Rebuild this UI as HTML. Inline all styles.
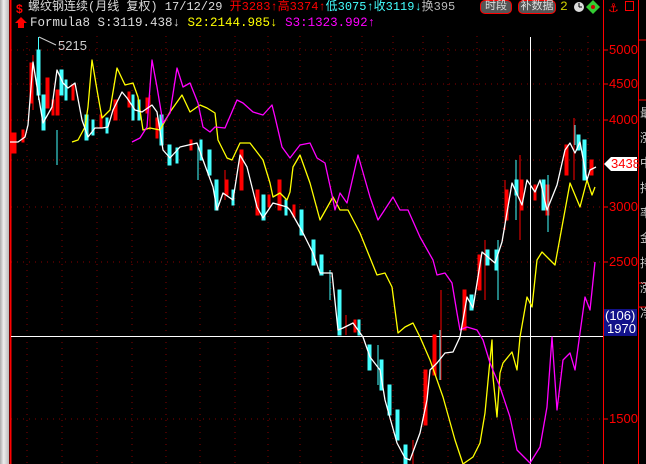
<!DOCTYPE html>
<html><head><meta charset="utf-8"><style>
html,body{margin:0;padding:0;background:#000;width:646px;height:464px;overflow:hidden}
body{position:relative;font-family:"Liberation Mono","Noto Sans CJK SC",monospace}
.t{position:absolute;white-space:nowrap;font-size:13px;line-height:14px}
.ax{position:absolute;left:609px;color:#f00;font-family:"Liberation Sans",sans-serif;font-size:13px;line-height:14px}
</style></head><body>
<div style="position:absolute;left:0;top:0;width:9px;height:464px;background:linear-gradient(90deg,#aaa,#eee 40%,#bbb)"></div>
<svg width="646" height="464" style="position:absolute;left:0;top:0">
<g stroke="#800" stroke-width="1" stroke-dasharray="1,5">
<line x1="11" y1="50" x2="603" y2="50"/><line x1="11" y1="84" x2="603" y2="84"/><line x1="11" y1="120" x2="603" y2="120"/><line x1="11" y1="160" x2="603" y2="160"/><line x1="11" y1="207" x2="603" y2="207"/><line x1="11" y1="262" x2="603" y2="262"/><line x1="11" y1="419" x2="603" y2="419"/>
<line x1="27" y1="36" x2="27" y2="464"/><line x1="62" y1="36" x2="62" y2="464"/><line x1="97" y1="36" x2="97" y2="464"/><line x1="132" y1="36" x2="132" y2="464"/><line x1="166" y1="36" x2="166" y2="464"/><line x1="200" y1="36" x2="200" y2="464"/><line x1="235" y1="36" x2="235" y2="464"/><line x1="268" y1="36" x2="268" y2="464"/><line x1="300" y1="36" x2="300" y2="464"/><line x1="331" y1="36" x2="331" y2="464"/><line x1="362" y1="36" x2="362" y2="464"/><line x1="393" y1="36" x2="393" y2="464"/><line x1="423" y1="36" x2="423" y2="464"/><line x1="448" y1="36" x2="448" y2="464"/><line x1="477" y1="36" x2="477" y2="464"/><line x1="503" y1="36" x2="503" y2="464"/><line x1="560" y1="36" x2="560" y2="464"/><line x1="588" y1="36" x2="588" y2="464"/>
</g>
<line x1="10.5" y1="0" x2="10.5" y2="464" stroke="#f00" stroke-width="2"/>
<line x1="603.5" y1="0" x2="603.5" y2="464" stroke="#f00"/>
<line x1="638.5" y1="0" x2="638.5" y2="464" stroke="#f00"/>
<g stroke="#f00"><line x1="603" y1="50" x2="608" y2="50"/><line x1="603" y1="84" x2="608" y2="84"/><line x1="603" y1="120" x2="608" y2="120"/><line x1="603" y1="207" x2="608" y2="207"/><line x1="603" y1="262" x2="608" y2="262"/><line x1="603" y1="419" x2="608" y2="419"/>
<line x1="638" y1="40" x2="646" y2="40"/><line x1="638" y1="100" x2="646" y2="100"/><line x1="638" y1="283" x2="646" y2="283"/><line x1="638" y1="307" x2="646" y2="307"/></g>
<line x1="11" y1="336.5" x2="603" y2="336.5" stroke="#fff"/>
<line x1="530.5" y1="37" x2="530.5" y2="464" stroke="#fff"/>
<g fill="#f00" stroke="#f00">
<rect x="12" y="133" width="4" height="20"/><rect x="22" y="130" width="2" height="12"/><rect x="30" y="63" width="3" height="40"/><rect x="46" y="78" width="3" height="30"/><rect x="52" y="100" width="2" height="15"/><rect x="56" y="90" width="3" height="25"/><rect x="72" y="85" width="2" height="15"/><rect x="100" y="115" width="2" height="12"/><rect x="114" y="100" width="3" height="20"/><rect x="128" y="92" width="2" height="15"/><rect x="146" y="98" width="2" height="15"/><rect x="156" y="118" width="2" height="20"/><rect x="190" y="140" width="2" height="10"/><rect x="226" y="180" width="2" height="15"/><rect x="240" y="150" width="3" height="40"/><rect x="256" y="190" width="3" height="25"/><rect x="268" y="195" width="2" height="12"/><rect x="278" y="180" width="3" height="30"/><rect x="293" y="205" width="2" height="12"/><rect x="354" y="320" width="2" height="12"/><rect x="424" y="370" width="3" height="55"/><rect x="433" y="335" width="3" height="40"/><rect x="463" y="290" width="3" height="40"/><rect x="478" y="255" width="3" height="35"/><rect x="505" y="190" width="3" height="30"/><rect x="520" y="180" width="3" height="30"/><rect x="534" y="185" width="2" height="15"/><rect x="546" y="185" width="3" height="30"/><rect x="565" y="145" width="3" height="30"/><rect x="590" y="160" width="3" height="15"/>
<line x1="441" y1="290" x2="441" y2="380"/><line x1="413" y1="440" x2="413" y2="464"/><line x1="574" y1="118" x2="574" y2="180"/><line x1="520" y1="155" x2="520" y2="240"/><line x1="485" y1="240" x2="485" y2="300"/><line x1="346" y1="315" x2="346" y2="335"/><line x1="33" y1="55" x2="33" y2="110"/><line x1="150" y1="95" x2="150" y2="130"/><line x1="225" y1="170" x2="225" y2="200"/><line x1="505" y1="180" x2="505" y2="230"/></g>
<g fill="#4ff" stroke="#4ff">
<line x1="38.5" y1="37" x2="38.5" y2="100"/><rect x="37" y="50" width="3" height="45"/><rect x="42" y="95" width="3" height="35"/><rect x="60" y="70" width="3" height="25"/><rect x="65" y="80" width="2" height="20"/><rect x="85" y="115" width="3" height="25"/><rect x="92" y="120" width="2" height="15"/><rect x="106" y="118" width="2" height="15"/><rect x="132" y="95" width="2" height="25"/><rect x="138" y="100" width="2" height="20"/><rect x="160" y="115" width="3" height="30"/><rect x="168" y="145" width="3" height="20"/><rect x="176" y="148" width="2" height="15"/><rect x="200" y="140" width="2" height="20"/><rect x="208" y="150" width="3" height="25"/><rect x="215" y="180" width="3" height="30"/><rect x="232" y="190" width="2" height="15"/><rect x="262" y="195" width="3" height="25"/><rect x="285" y="200" width="2" height="15"/><rect x="300" y="210" width="3" height="25"/><rect x="312" y="240" width="3" height="25"/><rect x="320" y="255" width="3" height="20"/><rect x="338" y="290" width="3" height="45"/><rect x="358" y="320" width="2" height="15"/><rect x="368" y="345" width="3" height="25"/><rect x="380" y="360" width="3" height="30"/><rect x="388" y="385" width="3" height="30"/><rect x="396" y="410" width="3" height="30"/><rect x="404" y="445" width="3" height="19"/><rect x="470" y="295" width="3" height="15"/><rect x="486" y="250" width="3" height="15"/><rect x="495" y="250" width="3" height="20"/><rect x="515" y="180" width="3" height="15"/><rect x="542" y="180" width="3" height="30"/><rect x="577" y="135" width="3" height="15"/><rect x="583" y="140" width="3" height="40"/>
<line x1="498" y1="240" x2="498" y2="300"/><line x1="516" y1="160" x2="516" y2="220"/><line x1="575" y1="125" x2="575" y2="145"/><line x1="440" y1="330" x2="440" y2="380"/><line x1="548" y1="175" x2="548" y2="232"/><line x1="57" y1="130" x2="57" y2="165"/><line x1="198" y1="145" x2="198" y2="180"/><line x1="330" y1="270" x2="330" y2="300"/><line x1="378" y1="345" x2="378" y2="385"/></g>
<g fill="none" stroke-width="1.3" stroke-linejoin="round">
<polyline stroke="#ff0" points="72,142 78,140 85,127 88,107 92,60 97,90 102,118 110,110 117,68 125,85 133,83 138,97 143,130 150,128 160,130 170,112 182,95 190,112 200,105 207,108 215,113 218,140 227,158 232,160 240,143 250,143 263,160 270,183 273,197 280,193 287,200 290,192 293,167 300,155 310,183 320,220 333,197 340,210 348,210 360,233 377,275 385,273 392,287 398,333 405,327 413,323 420,337 430,360 443,397 455,440 463,464 473,457 480,443 485,413 490,360 492,340 493,377 497,417 500,373 503,363 512,352 517,370 520,337 527,297 532,307 537,260 542,252 555,265 570,183 580,207 587,180 592,195 595,187"/>
<polyline stroke="#f0f" points="132,142 140,138 147,127 152,60 157,87 163,123 170,113 177,68 183,87 190,83 198,103 203,127 210,132 215,127 225,128 237,100 243,103 253,112 263,115 272,105 275,117 282,147 290,158 300,145 310,143 317,158 325,163 332,195 335,210 340,193 347,203 358,155 370,197 378,220 393,197 400,210 408,210 420,237 433,260 437,275 445,273 452,283 457,313 460,330 467,327 477,330 483,340 490,363 500,387 510,417 517,450 530,463 540,447 547,407 552,337 557,410 563,360 570,353 575,370 580,333 585,297 590,310 595,262"/>
<polyline stroke="#fff" points="10,142 18,142 25,137 28,125 33,62 38,93 43,123 52,107 57,70 63,83 68,88 75,83 82,120 88,137 95,128 102,128 108,127 113,110 122,92 127,98 135,110 142,112 152,105 157,112 163,150 170,158 180,147 197,143 203,160 213,187 217,210 223,193 233,200 240,155 247,167 257,207 263,218 273,203 287,207 290,210 303,233 313,253 320,273 332,273 338,330 343,328 353,323 358,330 363,337 370,357 380,370 385,400 397,443 405,458 410,460 420,433 427,400 430,370 437,363 445,353 453,352 460,337 467,297 473,308 482,252 495,263 502,242 512,183 522,205 527,180 535,192 540,180 547,210 557,185 565,150 570,143 575,153 580,142 587,180 590,170 596,167"/>
</g>
<polyline points="39,37 56,45" stroke="#ccc" fill="none"/>
<polygon points="604,164 611,157 637,157 637,171 611,171" fill="#fff"/>
<rect x="604" y="309" width="33" height="27" fill="#12128a"/>
<circle cx="579" cy="7" r="5" fill="#ddd"/><line x1="579" y1="7" x2="579" y2="3" stroke="#000"/><line x1="579" y1="7" x2="582" y2="7" stroke="#000"/>
<polygon points="593,0 600,7 593,14 586,7" fill="#3c3"/><circle cx="593" cy="7" r="2" fill="#c00"/>
<rect x="625.5" y="1.5" width="8" height="9" fill="none" stroke="#f00"/>
<text x="608" y="12" fill="#f00" font-size="12" font-family="DejaVu Sans">⚓</text>
<text x="16" y="13" fill="#f00" font-size="12" font-weight="bold" font-family="Liberation Sans">$</text>
<polygon points="21,17 27,23 24,23 24,28 18,28 18,23 15,23" fill="#f00"/>
</svg>
<div class="t" style="left:28px;top:0;color:#ddd;font-size:12px">螺纹钢连续(月线 复权) 17/12/29 <span style="color:#f00">开3283↑高3374↑</span><span style="color:#4ff">低3075↑收3119↓</span><span style="color:#bbb">换395</span></div>
<div class="t" style="left:480px;top:0;width:30px;height:12px;background:#555;border:1px solid #f00;border-radius:5px;color:#ddd;font-size:11px;text-align:center;line-height:12px">时段</div>
<div class="t" style="left:518px;top:0;width:36px;height:12px;background:#555;border:1px solid #f00;border-radius:5px;color:#ddd;font-size:11px;text-align:center;line-height:12px">补数据</div>
<div class="t" style="left:560px;top:0;color:#cc0">2</div>
<div class="t" style="left:30px;top:16px;color:#ddd;font-size:12.5px">Formula8 S:3119.438↓ <span style="color:#ff0">S2:2144.985↓</span> <span style="color:#f0f">S3:1323.992↑</span></div>
<div class="t" style="left:58px;top:39px;color:#ccc;font-family:'Liberation Sans',sans-serif">5215</div>
<div class="ax" style="top:43px">5000</div>
<div class="ax" style="top:77px">4500</div>
<div class="ax" style="top:113px">4000</div>
<div class="ax" style="top:200px">3000</div>
<div class="ax" style="top:255px">2500</div>
<div class="ax" style="top:412px">1500</div>
<div class="ax" style="top:157px;left:611px;color:#f00">3438</div>
<div class="ax" style="top:309px;left:605px;color:#fff">(106)</div>
<div class="ax" style="top:322px;left:607px;color:#fff">1970</div>
<div class="t" style="left:640px;top:102px;color:#ccc;width:10px;font-size:12px;line-height:25px;white-space:normal">最涨中持率金持涨净</div>
</body></html>
